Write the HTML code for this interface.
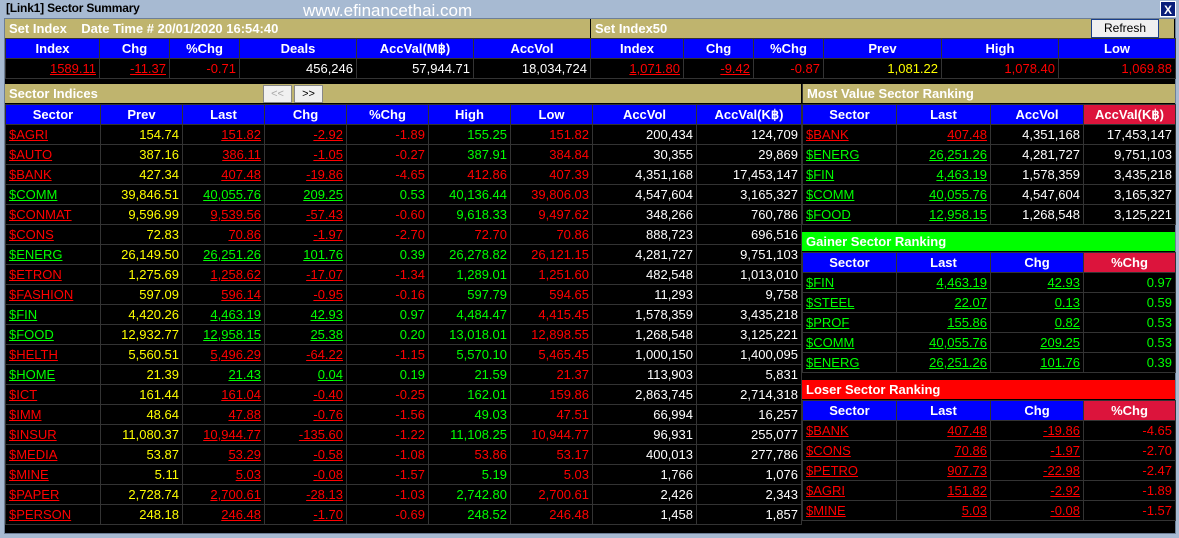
<!DOCTYPE html>
<html><head><meta charset="utf-8"><style>
*{box-sizing:border-box;margin:0;padding:0}
body{width:1179px;height:538px;background:#a7bad2;position:relative;overflow:hidden;font-family:"Liberation Sans",Arial,sans-serif;font-size:13px}
#title{position:absolute;left:6px;top:1px;font-weight:bold;font-size:12px;color:#000;letter-spacing:-0.2px}
#site{position:absolute;left:303px;top:1px;font-size:17px;color:#fff;line-height:20px}
#x{position:absolute;left:1160px;top:1px;width:16px;height:16px;background:#0a1f7a;color:#fff;font-weight:bold;font-size:12px;text-align:center;line-height:16px;border:1px solid #fff}
#panel{position:absolute;left:4px;top:18px;width:1172px;height:516px;background:#000;border:1px solid #6e7f96}
.bar{position:absolute;background:#bfb46e;color:#fff;font-weight:bold;font-size:13px;line-height:19px;padding-left:4px;height:19px}
table{position:absolute;border-collapse:collapse;table-layout:fixed}
td{border:1px solid #333;height:19px;line-height:19px;padding:0 3px 0 3px;text-align:right;white-space:nowrap;overflow:hidden;color:#fff}
tr.h td{background:#0000ff;color:#fff;font-weight:bold;text-align:center;height:19px;line-height:19px;font-size:13px}
tr.h td.pk{background:#dc143c}
td.l{text-align:left}
.r{color:#f00}.g{color:#0f0}.y{color:#ff0}.w{color:#fff}
.u{text-decoration:underline}
.btn{position:absolute;height:18px;background:#f0f0f0;border:1px solid #888;font-size:11px;text-align:center;line-height:16px;color:#000}
</style></head><body>
<div id="title">[Link1] Sector Summary</div>
<div id="site">www.efinancethai.com</div>
<div id="x">X</div>
<div id="panel"></div>

<div class="bar" style="left:5px;top:19px;width:585px">Set Index&nbsp;&nbsp;&nbsp;&nbsp;Date Time # 20/01/2020 16:54:40</div>
<div class="bar" style="left:591px;top:19px;width:583px">Set Index50</div>
<div class="btn" style="left:1091px;top:19px;width:68px;height:19px;line-height:17px;font-size:12px;border:1px solid #1a3f8a">Refresh</div>

<table style="left:5px;top:38px;width:1170px">
<colgroup><col style="width:94px"><col style="width:70px"><col style="width:70px"><col style="width:117px"><col style="width:117px"><col style="width:117px"><col style="width:93px"><col style="width:70px"><col style="width:70px"><col style="width:118px"><col style="width:117px"><col style="width:117px"></colgroup>
<tr class="h"><td>Index</td><td>Chg</td><td>%Chg</td><td>Deals</td><td>AccVal(M฿)</td><td>AccVol</td><td>Index</td><td>Chg</td><td>%Chg</td><td>Prev</td><td>High</td><td>Low</td></tr>
<tr><td class="r u">1589.11</td><td class="r u">-11.37</td><td class="r">-0.71</td><td>456,246</td><td>57,944.71</td><td>18,034,724</td><td class="r u">1,071.80</td><td class="r u">-9.42</td><td class="r">-0.87</td><td class="y">1,081.22</td><td class="r">1,078.40</td><td class="r">1,069.88</td></tr>
</table>

<div class="bar" style="left:5px;top:84px;width:796px">Sector Indices</div>
<div class="btn" style="left:263px;top:85px;width:29px;color:#aaa">&lt;&lt;</div>
<div class="btn" style="left:294px;top:85px;width:29px">&gt;&gt;</div>

<table style="left:5px;top:104px;width:796px">
<colgroup><col style="width:95px"><col style="width:82px"><col style="width:82px"><col style="width:82px"><col style="width:82px"><col style="width:82px"><col style="width:82px"><col style="width:104px"><col style="width:105px"></colgroup>
<tr class="h"><td>Sector</td><td>Prev</td><td>Last</td><td>Chg</td><td>%Chg</td><td>High</td><td>Low</td><td>AccVol</td><td>AccVal(K฿)</td></tr>
<tr><td class="l r u">$AGRI</td><td class="y">154.74</td><td class="r u">151.82</td><td class="r u">-2.92</td><td class="r">-1.89</td><td class="g">155.25</td><td class="r">151.82</td><td>200,434</td><td>124,709</td></tr>
<tr><td class="l r u">$AUTO</td><td class="y">387.16</td><td class="r u">386.11</td><td class="r u">-1.05</td><td class="r">-0.27</td><td class="g">387.91</td><td class="r">384.84</td><td>30,355</td><td>29,869</td></tr>
<tr><td class="l r u">$BANK</td><td class="y">427.34</td><td class="r u">407.48</td><td class="r u">-19.86</td><td class="r">-4.65</td><td class="r">412.86</td><td class="r">407.39</td><td>4,351,168</td><td>17,453,147</td></tr>
<tr><td class="l g u">$COMM</td><td class="y">39,846.51</td><td class="g u">40,055.76</td><td class="g u">209.25</td><td class="g">0.53</td><td class="g">40,136.44</td><td class="r">39,806.03</td><td>4,547,604</td><td>3,165,327</td></tr>
<tr><td class="l r u">$CONMAT</td><td class="y">9,596.99</td><td class="r u">9,539.56</td><td class="r u">-57.43</td><td class="r">-0.60</td><td class="g">9,618.33</td><td class="r">9,497.62</td><td>348,266</td><td>760,786</td></tr>
<tr><td class="l r u">$CONS</td><td class="y">72.83</td><td class="r u">70.86</td><td class="r u">-1.97</td><td class="r">-2.70</td><td class="r">72.70</td><td class="r">70.86</td><td>888,723</td><td>696,516</td></tr>
<tr><td class="l g u">$ENERG</td><td class="y">26,149.50</td><td class="g u">26,251.26</td><td class="g u">101.76</td><td class="g">0.39</td><td class="g">26,278.82</td><td class="r">26,121.15</td><td>4,281,727</td><td>9,751,103</td></tr>
<tr><td class="l r u">$ETRON</td><td class="y">1,275.69</td><td class="r u">1,258.62</td><td class="r u">-17.07</td><td class="r">-1.34</td><td class="g">1,289.01</td><td class="r">1,251.60</td><td>482,548</td><td>1,013,010</td></tr>
<tr><td class="l r u">$FASHION</td><td class="y">597.09</td><td class="r u">596.14</td><td class="r u">-0.95</td><td class="r">-0.16</td><td class="g">597.79</td><td class="r">594.65</td><td>11,293</td><td>9,758</td></tr>
<tr><td class="l g u">$FIN</td><td class="y">4,420.26</td><td class="g u">4,463.19</td><td class="g u">42.93</td><td class="g">0.97</td><td class="g">4,484.47</td><td class="r">4,415.45</td><td>1,578,359</td><td>3,435,218</td></tr>
<tr><td class="l g u">$FOOD</td><td class="y">12,932.77</td><td class="g u">12,958.15</td><td class="g u">25.38</td><td class="g">0.20</td><td class="g">13,018.01</td><td class="r">12,898.55</td><td>1,268,548</td><td>3,125,221</td></tr>
<tr><td class="l r u">$HELTH</td><td class="y">5,560.51</td><td class="r u">5,496.29</td><td class="r u">-64.22</td><td class="r">-1.15</td><td class="g">5,570.10</td><td class="r">5,465.45</td><td>1,000,150</td><td>1,400,095</td></tr>
<tr><td class="l g u">$HOME</td><td class="y">21.39</td><td class="g u">21.43</td><td class="g u">0.04</td><td class="g">0.19</td><td class="g">21.59</td><td class="r">21.37</td><td>113,903</td><td>5,831</td></tr>
<tr><td class="l r u">$ICT</td><td class="y">161.44</td><td class="r u">161.04</td><td class="r u">-0.40</td><td class="r">-0.25</td><td class="g">162.01</td><td class="r">159.86</td><td>2,863,745</td><td>2,714,318</td></tr>
<tr><td class="l r u">$IMM</td><td class="y">48.64</td><td class="r u">47.88</td><td class="r u">-0.76</td><td class="r">-1.56</td><td class="g">49.03</td><td class="r">47.51</td><td>66,994</td><td>16,257</td></tr>
<tr><td class="l r u">$INSUR</td><td class="y">11,080.37</td><td class="r u">10,944.77</td><td class="r u">-135.60</td><td class="r">-1.22</td><td class="g">11,108.25</td><td class="r">10,944.77</td><td>96,931</td><td>255,077</td></tr>
<tr><td class="l r u">$MEDIA</td><td class="y">53.87</td><td class="r u">53.29</td><td class="r u">-0.58</td><td class="r">-1.08</td><td class="r">53.86</td><td class="r">53.17</td><td>400,013</td><td>277,786</td></tr>
<tr><td class="l r u">$MINE</td><td class="y">5.11</td><td class="r u">5.03</td><td class="r u">-0.08</td><td class="r">-1.57</td><td class="g">5.19</td><td class="r">5.03</td><td>1,766</td><td>1,076</td></tr>
<tr><td class="l r u">$PAPER</td><td class="y">2,728.74</td><td class="r u">2,700.61</td><td class="r u">-28.13</td><td class="r">-1.03</td><td class="g">2,742.80</td><td class="r">2,700.61</td><td>2,426</td><td>2,343</td></tr>
<tr><td class="l r u">$PERSON</td><td class="y">248.18</td><td class="r u">246.48</td><td class="r u">-1.70</td><td class="r">-0.69</td><td class="g">248.52</td><td class="r">246.48</td><td>1,458</td><td>1,857</td></tr>
</table>

<div class="bar" style="left:802px;top:84px;width:373px;border-left:1px solid #333">Most Value Sector Ranking</div>
<table style="left:802px;top:104px;width:373px">
<colgroup><col style="width:94px"><col style="width:94px"><col style="width:93px"><col style="width:92px"></colgroup>
<tr class="h"><td>Sector</td><td>Last</td><td>AccVol</td><td class="pk">AccVal(K฿)</td></tr>
<tr><td class="l r u">$BANK</td><td class="r u">407.48</td><td>4,351,168</td><td>17,453,147</td></tr>
<tr><td class="l g u">$ENERG</td><td class="g u">26,251.26</td><td>4,281,727</td><td>9,751,103</td></tr>
<tr><td class="l g u">$FIN</td><td class="g u">4,463.19</td><td>1,578,359</td><td>3,435,218</td></tr>
<tr><td class="l g u">$COMM</td><td class="g u">40,055.76</td><td>4,547,604</td><td>3,165,327</td></tr>
<tr><td class="l g u">$FOOD</td><td class="g u">12,958.15</td><td>1,268,548</td><td>3,125,221</td></tr>
</table>

<div class="bar" style="left:802px;top:232px;width:373px;background:#00ff00">Gainer Sector Ranking</div>
<table style="left:802px;top:252px;width:373px">
<colgroup><col style="width:94px"><col style="width:94px"><col style="width:93px"><col style="width:92px"></colgroup>
<tr class="h"><td>Sector</td><td>Last</td><td>Chg</td><td class="pk">%Chg</td></tr>
<tr><td class="l g u">$FIN</td><td class="g u">4,463.19</td><td class="g u">42.93</td><td class="g">0.97</td></tr>
<tr><td class="l g u">$STEEL</td><td class="g u">22.07</td><td class="g u">0.13</td><td class="g">0.59</td></tr>
<tr><td class="l g u">$PROF</td><td class="g u">155.86</td><td class="g u">0.82</td><td class="g">0.53</td></tr>
<tr><td class="l g u">$COMM</td><td class="g u">40,055.76</td><td class="g u">209.25</td><td class="g">0.53</td></tr>
<tr><td class="l g u">$ENERG</td><td class="g u">26,251.26</td><td class="g u">101.76</td><td class="g">0.39</td></tr>
</table>

<div class="bar" style="left:802px;top:380px;width:373px;background:#ff0000">Loser Sector Ranking</div>
<table style="left:802px;top:400px;width:373px">
<colgroup><col style="width:94px"><col style="width:94px"><col style="width:93px"><col style="width:92px"></colgroup>
<tr class="h"><td>Sector</td><td>Last</td><td>Chg</td><td class="pk">%Chg</td></tr>
<tr><td class="l r u">$BANK</td><td class="r u">407.48</td><td class="r u">-19.86</td><td class="r">-4.65</td></tr>
<tr><td class="l r u">$CONS</td><td class="r u">70.86</td><td class="r u">-1.97</td><td class="r">-2.70</td></tr>
<tr><td class="l r u">$PETRO</td><td class="r u">907.73</td><td class="r u">-22.98</td><td class="r">-2.47</td></tr>
<tr><td class="l r u">$AGRI</td><td class="r u">151.82</td><td class="r u">-2.92</td><td class="r">-1.89</td></tr>
<tr><td class="l r u">$MINE</td><td class="r u">5.03</td><td class="r u">-0.08</td><td class="r">-1.57</td></tr>
</table>
</body></html>
